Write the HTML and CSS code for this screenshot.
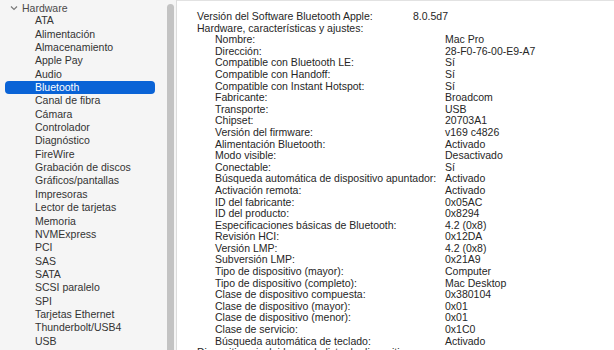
FILE: index.html
```html
<!DOCTYPE html>
<html lang="es">
<head>
    <meta charset="UTF-8">
    <title>Información del sistema</title>
    <link rel="stylesheet" href="styles.css">
</head>
<body>
    <div class="sidebar">
        <div class="tree">
            <div class="group">
                <svg class="chevron" width="8" height="6" viewBox="0 0 8 6"><polyline points="1,1.5 4,4.5 7,1.5" fill="none" stroke="#7a7a7a" stroke-width="1.2"/></svg>
                Hardware
            </div>
            <div class="item">ATA</div>
            <div class="item">Alimentación</div>
            <div class="item">Almacenamiento</div>
            <div class="item">Apple Pay</div>
            <div class="item">Audio</div>
            <div class="item selected">Bluetooth</div>
            <div class="item">Canal de fibra</div>
            <div class="item">Cámara</div>
            <div class="item">Controlador</div>
            <div class="item">Diagnóstico</div>
            <div class="item">FireWire</div>
            <div class="item">Grabación de discos</div>
            <div class="item">Gráficos/pantallas</div>
            <div class="item">Impresoras</div>
            <div class="item">Lector de tarjetas</div>
            <div class="item">Memoria</div>
            <div class="item">NVMExpress</div>
            <div class="item">PCI</div>
            <div class="item">SAS</div>
            <div class="item">SATA</div>
            <div class="item">SCSI paralelo</div>
            <div class="item">SPI</div>
            <div class="item">Tarjetas Ethernet</div>
            <div class="item">Thunderbolt/USB4</div>
            <div class="item">USB</div>
        </div>
        <div class="scrollbar"></div>
    </div>

    <div class="content">
        <div class="row"><span>Versión del Software Bluetooth Apple:</span><span>8.0.5d7</span></div>
        <div class="row"><span>Hardware, características y ajustes:</span><span></span></div>
        <div class="row sub"><span>Nombre:</span><span>Mac Pro</span></div>
        <div class="row sub"><span>Dirección:</span><span>28-F0-76-00-E9-A7</span></div>
        <div class="row sub"><span>Compatible con Bluetooth LE:</span><span>Sí</span></div>
        <div class="row sub"><span>Compatible con Handoff:</span><span>Sí</span></div>
        <div class="row sub"><span>Compatible con Instant Hotspot:</span><span>Sí</span></div>
        <div class="row sub"><span>Fabricante:</span><span>Broadcom</span></div>
        <div class="row sub"><span>Transporte:</span><span>USB</span></div>
        <div class="row sub"><span>Chipset:</span><span>20703A1</span></div>
        <div class="row sub"><span>Versión del firmware:</span><span>v169 c4826</span></div>
        <div class="row sub"><span>Alimentación Bluetooth:</span><span>Activado</span></div>
        <div class="row sub"><span>Modo visible:</span><span>Desactivado</span></div>
        <div class="row sub"><span>Conectable:</span><span>Sí</span></div>
        <div class="row sub"><span>Búsqueda automática de dispositivo apuntador:</span><span>Activado</span></div>
        <div class="row sub"><span>Activación remota:</span><span>Activado</span></div>
        <div class="row sub"><span>ID del fabricante:</span><span>0x05AC</span></div>
        <div class="row sub"><span>ID del producto:</span><span>0x8294</span></div>
        <div class="row sub"><span>Especificaciones básicas de Bluetooth:</span><span>4.2 (0x8)</span></div>
        <div class="row sub"><span>Revisión HCI:</span><span>0x12DA</span></div>
        <div class="row sub"><span>Versión LMP:</span><span>4.2 (0x8)</span></div>
        <div class="row sub"><span>Subversión LMP:</span><span>0x21A9</span></div>
        <div class="row sub"><span>Tipo de dispositivo (mayor):</span><span>Computer</span></div>
        <div class="row sub"><span>Tipo de dispositivo (completo):</span><span>Mac Desktop</span></div>
        <div class="row sub"><span>Clase de dispositivo compuesta:</span><span>0x380104</span></div>
        <div class="row sub"><span>Clase de dispositivo (mayor):</span><span>0x01</span></div>
        <div class="row sub"><span>Clase de dispositivo (menor):</span><span>0x01</span></div>
        <div class="row sub"><span>Clase de servicio:</span><span>0x1C0</span></div>
        <div class="row sub"><span>Búsqueda automática de teclado:</span><span>Activado</span></div>
        <div class="row"><span>Dispositivos incluidos en la lista de dispositivos:</span><span></span></div>
    </div>
</body>
</html>
```

FILE: styles.css
```css
body, html {
    height: 100%;
    margin: 0;
    overflow: hidden;
}
body {
    display: flex;
    font-family: "Liberation Sans", Arial, sans-serif;
    font-size: 10.5px;
    color: #262626;
}
.sidebar {
    width: 176px;
    display: flex;
    background-color: #f5f5f5;
    border-right: 1px solid #dcdcdc;
}
.tree {
    flex: 1;
    padding-top: 1px;
}
.group {
    display: flex;
    align-items: center;
    height: 13.35px;
    padding-left: 10px;
    color: #4a4a4a;
}
.chevron {
    margin-right: 4px;
}
.item {
    height: 13.35px;
    line-height: 13.35px;
    margin: 0 12px 0 5px;
    padding-left: 30px;
    color: #333;
}
.item.selected {
    background-color: #0a63d6;
    color: #fff;
    border-radius: 4px;
}
.scrollbar {
    width: 7px;
    margin: 4px 2px 0 0;
    background-color: #c3c3c3;
    border-radius: 4px 4px 0 0;
}
.content {
    flex: 1;
    background-color: #fff;
    border-top: 1px solid #e2e2e2;
    padding: 10px 0 0 20px;
    white-space: nowrap;
}
.row {
    display: grid;
    grid-template-columns: 216px auto;
    line-height: 11.6px;
}
.row.sub {
    padding-left: 18px;
    grid-template-columns: 230px auto;
}
```
